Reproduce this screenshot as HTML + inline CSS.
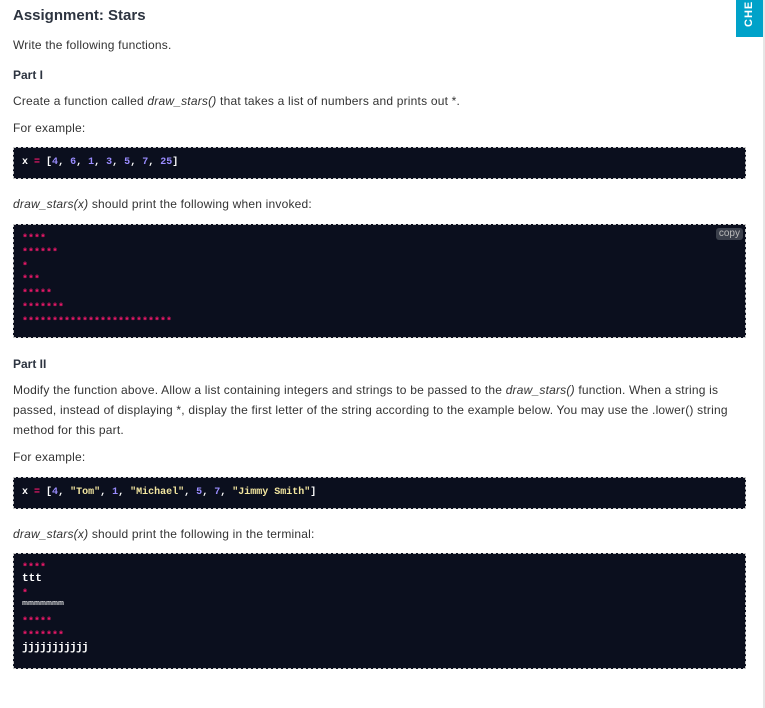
<!DOCTYPE html>
<html><head><meta charset="utf-8"><style>
body{margin:0;width:765px;height:708px;background:#fff;position:relative;overflow:hidden;font-family:"Liberation Sans",sans-serif;color:#333;}
.t{position:absolute;left:13px;font-size:12px;letter-spacing:0.2px;white-space:nowrap;line-height:14px}
h1{position:absolute;left:13px;top:7px;margin:0;font-size:15px;color:#2d3440;font-weight:bold}
h2{position:absolute;left:13px;margin:0;font-size:12px;color:#2d3440;font-weight:bold}
.code{position:absolute;left:13px;width:733px;background:#0b0f1e;border:1px dashed #c8c8c8;box-sizing:border-box}
.mono{font-family:"Liberation Mono","DejaVu Sans Mono",monospace;font-weight:bold;font-size:10px;color:#fff;position:absolute;left:8px;white-space:pre}
.s{color:#f0186a;font-size:10px;line-height:13.8px;transform:translateY(3px)}
.n{color:#9a8cff}.p{color:#f0186a}.q{color:#f3e6a0}
.copy{position:absolute;right:2px;top:3px;background:#3a3f4b;color:#bbb;font-size:10px;border-radius:3px;padding:0 3px;line-height:12px}
i{font-style:italic}
</style></head><body>
<div style="position:absolute;left:736px;top:0;width:27px;height:37px;background:#00a2c9;"></div>
<div style="position:absolute;left:743px;top:27px;transform:rotate(-90deg);transform-origin:0 0;color:#fff;font-size:11px;font-weight:bold;letter-spacing:1px;">CHE</div>
<div style="position:absolute;left:763px;top:0;width:2px;height:708px;background:#e6e6e6"></div>
<h1>Assignment: Stars</h1>
<div class="t" style="top:38px">Write the following functions.</div>
<h2 style="top:68px">Part I</h2>
<div class="t" style="top:94px">Create a function called <i>draw_stars()</i> that takes a list of numbers and prints out *.</div>
<div class="t" style="top:121px">For example:</div>
<div class="code" style="top:147px;height:32px"><div class="mono" style="top:9px">x <span class="p">=</span> [<span class="n">4</span>, <span class="n">6</span>, <span class="n">1</span>, <span class="n">3</span>, <span class="n">5</span>, <span class="n">7</span>, <span class="n">25</span>]</div></div>
<div class="t" style="top:197px"><i>draw_stars(x)</i> should print the following when invoked:</div>
<div class="code" style="top:224px;height:114px"><div class="copy">copy</div>
<div class="mono s" style="top:5px">****
******
*
***
*****
*******
*************************</div></div>
<h2 style="top:357px">Part II</h2>
<div class="t" style="top:383px">Modify the function above. Allow a list containing integers and strings to be passed to the <i>draw_stars()</i> function. When a string is</div>
<div class="t" style="top:403px">passed, instead of displaying *, display the first letter of the string according to the example below. You may use the .lower() string</div>
<div class="t" style="top:423px">method for this part.</div>
<div class="t" style="top:450px">For example:</div>
<div class="code" style="top:477px;height:32px"><div class="mono" style="top:9px">x <span class="p">=</span> [<span class="n">4</span>, <span class="q">"Tom"</span>, <span class="n">1</span>, <span class="q">"Michael"</span>, <span class="n">5</span>, <span class="n">7</span>, <span class="q">"Jimmy Smith"</span>]</div></div>
<div class="t" style="top:527px"><i>draw_stars(x)</i> should print the following in the terminal:</div>
<div class="code" style="top:553px;height:116px">
<div class="mono s" style="top:5px">****</div>
<div class="mono" style="top:19px;font-size:11px">ttt</div>
<div class="mono s" style="top:31px">*</div>
<div class="mono" style="top:46px;font-size:10px;font-weight:normal;transform:scaleY(0.7);transform-origin:0 0">mmmmmmm</div>
<div class="mono s" style="top:59px">*****
*******</div>
<div class="mono" style="top:88px;font-size:11px;letter-spacing:-0.6px">jjjjjjjjjjj</div>
</div>
</body></html>
